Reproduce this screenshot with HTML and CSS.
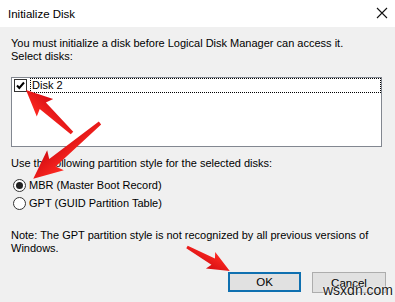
FILE: index.html
```html
<!DOCTYPE html>
<html>
<head>
<meta charset="utf-8">
<link rel="stylesheet" href="styles.css">
</head>
<body>
<div class="dialog">
  <div class="titlebar">
    <span class="title">Initialize Disk</span>
    <svg class="close" width="12" height="12" viewBox="0 0 12 12"><path d="M1 1 L11 11 M11 1 L1 11" stroke="#111" stroke-width="1.1" fill="none"/></svg>
  </div>
  <div class="content">
    <p class="line l1">You must initialize a disk before Logical Disk Manager can access it.</p>
    <p class="line">Select disks:</p>
    <div class="listbox">
      <div class="item">
        <span class="check"><svg width="11" height="11" viewBox="0 0 11 11"><path d="M2 5.5 L4.3 8 L9 2.5" stroke="#000" stroke-width="2" fill="none"/></svg></span>
        <span class="itemlabel">Disk 2</span>
      </div>
    </div>
    <p class="line l3">Use the following partition style for the selected disks:</p>
    <div class="radios">
      <div class="radio"><span class="circle on"></span><span>MBR (Master Boot Record)</span></div>
      <div class="radio"><span class="circle"></span><span>GPT (GUID Partition Table)</span></div>
    </div>
    <p class="note">Note: The GPT partition style is not recognized by all previous versions of Windows.</p>
    <div class="buttons">
      <div class="btn ok">OK</div>
      <div class="btn">Cancel</div>
    </div>
  </div>
  <svg class="arrows" width="395" height="302" viewBox="0 0 395 302">
    <defs>
      <linearGradient id="rg" x1="0" y1="0" x2="0" y2="1">
        <stop offset="0" stop-color="#ff2a22"/>
        <stop offset="1" stop-color="#d40d12"/>
      </linearGradient>
    </defs>
    <g transform="translate(72 133) rotate(223.1)">
      <polygon fill="url(#rg)" points="0,-1.8 40,-4.5 37,-12 63,0 37,12 40,4.5 0,1.8"/>
    </g>
    <g transform="translate(100 123) rotate(140.1)">
      <polygon fill="url(#rg)" points="0,-1.8 62,-5 58,-13 87,0 58,13 62,5 0,1.8"/>
    </g>
    <g transform="translate(187 247) rotate(29.2)">
      <polygon fill="url(#rg)" points="0,-1.5 30,-3.6 27,-9.5 49,0 27,9.5 30,3.6 0,1.5"/>
    </g>
  </svg>
  <div class="watermark">wsxdn.com</div>
</div>
</body>
</html>
```

FILE: styles.css
```css
html, body {
  margin: 0;
  padding: 0;
}
body {
  width: 395px;
  height: 302px;
  overflow: hidden;
  background: #f0f0f0;
  font-family: "Liberation Sans", Arial, sans-serif;
  font-size: 11px;
  color: #000;
}
.dialog {
  position: relative;
  width: 395px;
  height: 302px;
}
.titlebar {
  height: 27px;
  background: #fff;
  display: flex;
  align-items: center;
  justify-content: space-between;
  padding: 0 7px 0 8px;
}
.title {
  font-size: 11.5px;
  color: #000;
}
.close {
  display: block;
  margin-top: -1px;
}
.content {
  padding: 0 13px 0 11px;
}
.line {
  margin: 0;
  line-height: 13px;
}
.l1 {
  margin-top: 10px;
}
.listbox {
  margin-top: 14px;
  height: 68px;
  background: #fff;
  border: 1px solid #828790;
}
.item {
  display: flex;
  align-items: center;
  height: 14px;
}
.check {
  width: 11px;
  height: 11px;
  border: 1px solid #333;
  margin: 1px 3px 0 2px;
  background: #fff;
  display: flex;
}
.itemlabel {
  flex: 1;
  height: 13px;
  line-height: 13px;
  border: 1px dotted #000;
  padding-left: 1px;
}
.l3 {
  margin-top: 10px;
}
.radios {
  margin-top: 6px;
}
.radio {
  display: flex;
  align-items: center;
  height: 18px;
}
.circle {
  width: 11px;
  height: 11px;
  border: 1px solid #333;
  border-radius: 50%;
  margin: 0 3px 0 2px;
  background: #fff;
  display: flex;
  align-items: center;
  justify-content: center;
}
.circle.on::after {
  content: "";
  width: 7px;
  height: 7px;
  border-radius: 50%;
  background: #222;
}
.note {
  margin: 17px 0 0;
  line-height: 12.5px;
  width: 360px;
}
.buttons {
  display: flex;
  justify-content: flex-end;
  gap: 11px;
  margin-top: 18px;
  margin-right: -4px;
}
.btn {
  width: 72px;
  height: 19px;
  background: #e1e1e1;
  border: 1px solid #adadad;
  display: flex;
  align-items: center;
  justify-content: center;
  line-height: 14px;
  font-size: 11.5px;
}
.btn.ok {
  width: 69px;
  height: 16px;
  border: 2px solid #0f70b0;
}
.arrows {
  position: absolute;
  left: 0;
  top: 0;
  pointer-events: none;
}
.watermark {
  position: absolute;
  left: 323px;
  top: 283px;
  font-size: 14px;
  line-height: 15px;
  color: #1a1a1a;
  text-shadow: 0 0 2px #fff, 0 0 2px #fff;
}
```
